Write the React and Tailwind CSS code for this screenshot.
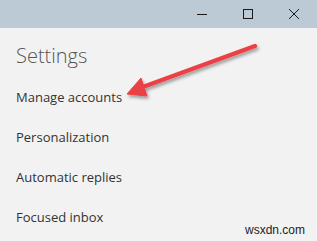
import React from 'react';

const items = ['Manage accounts', 'Personalization', 'Automatic replies', 'Focused inbox'];

function TitleBar() {
  return (
    <div className="h-7 bg-[#bccad6] flex justify-end items-center text-[#1a1a1a]">
      {/* Minimize */}
      <div className="w-[46px] h-7 flex items-center justify-center">
        <svg width="10" height="10" viewBox="0 0 10 10">
          <path d="M0 5.5h10" stroke="currentColor" strokeWidth="1" />
        </svg>
      </div>
      {/* Maximize */}
      <div className="w-[46px] h-7 flex items-center justify-center">
        <svg width="10" height="10" viewBox="0 0 10 10">
          <rect x="0.5" y="0.5" width="9" height="9" fill="none" stroke="currentColor" strokeWidth="1" />
        </svg>
      </div>
      {/* Close */}
      <div className="w-[46px] h-7 flex items-center justify-center">
        <svg width="10" height="10" viewBox="0 0 10 10">
          <path d="M0 0L10 10M10 0L0 10" stroke="currentColor" strokeWidth="1" />
        </svg>
      </div>
    </div>
  );
}

export default function App() {
  return (
    <div className="relative w-[317px] h-[241px] overflow-hidden bg-[#f2f2f2] font-['Open_Sans',sans-serif]">
      <TitleBar />

      <div className="px-4">
        <h1 className="text-[20px] font-light text-[#555] leading-7 mt-[14px]">Settings</h1>
        <ul className="mt-[18px] flex flex-col gap-[22px]">
          {items.map((label) => (
            <li key={label} className="text-[13px] leading-[18px] text-[#333]">
              {label}
            </li>
          ))}
        </ul>
      </div>

      {/* Red annotation arrow */}
      <svg
        className="absolute left-0 top-0 pointer-events-none"
        width="317"
        height="241"
        viewBox="0 0 317 241"
      >
        <defs>
          <filter id="shadow" x="-20%" y="-50%" width="140%" height="200%">
            <feDropShadow dx="1.5" dy="2.5" stdDeviation="1.5" floodColor="#000" floodOpacity="0.35" />
          </filter>
        </defs>
        <g filter="url(#shadow)" fill="#ec4146" stroke="#ec4146">
          <line x1="255" y1="46" x2="140" y2="88" strokeWidth="4.5" strokeLinecap="round" />
          <polygon points="127,94 141,78 147,96" strokeWidth="1" strokeLinejoin="round" />
        </g>
      </svg>

      <div className="absolute right-[12px] bottom-[4px] text-[12px] leading-[14px] text-[#222] font-['Liberation_Sans',sans-serif]">
        wsxdn.com
      </div>
    </div>
  );
}
